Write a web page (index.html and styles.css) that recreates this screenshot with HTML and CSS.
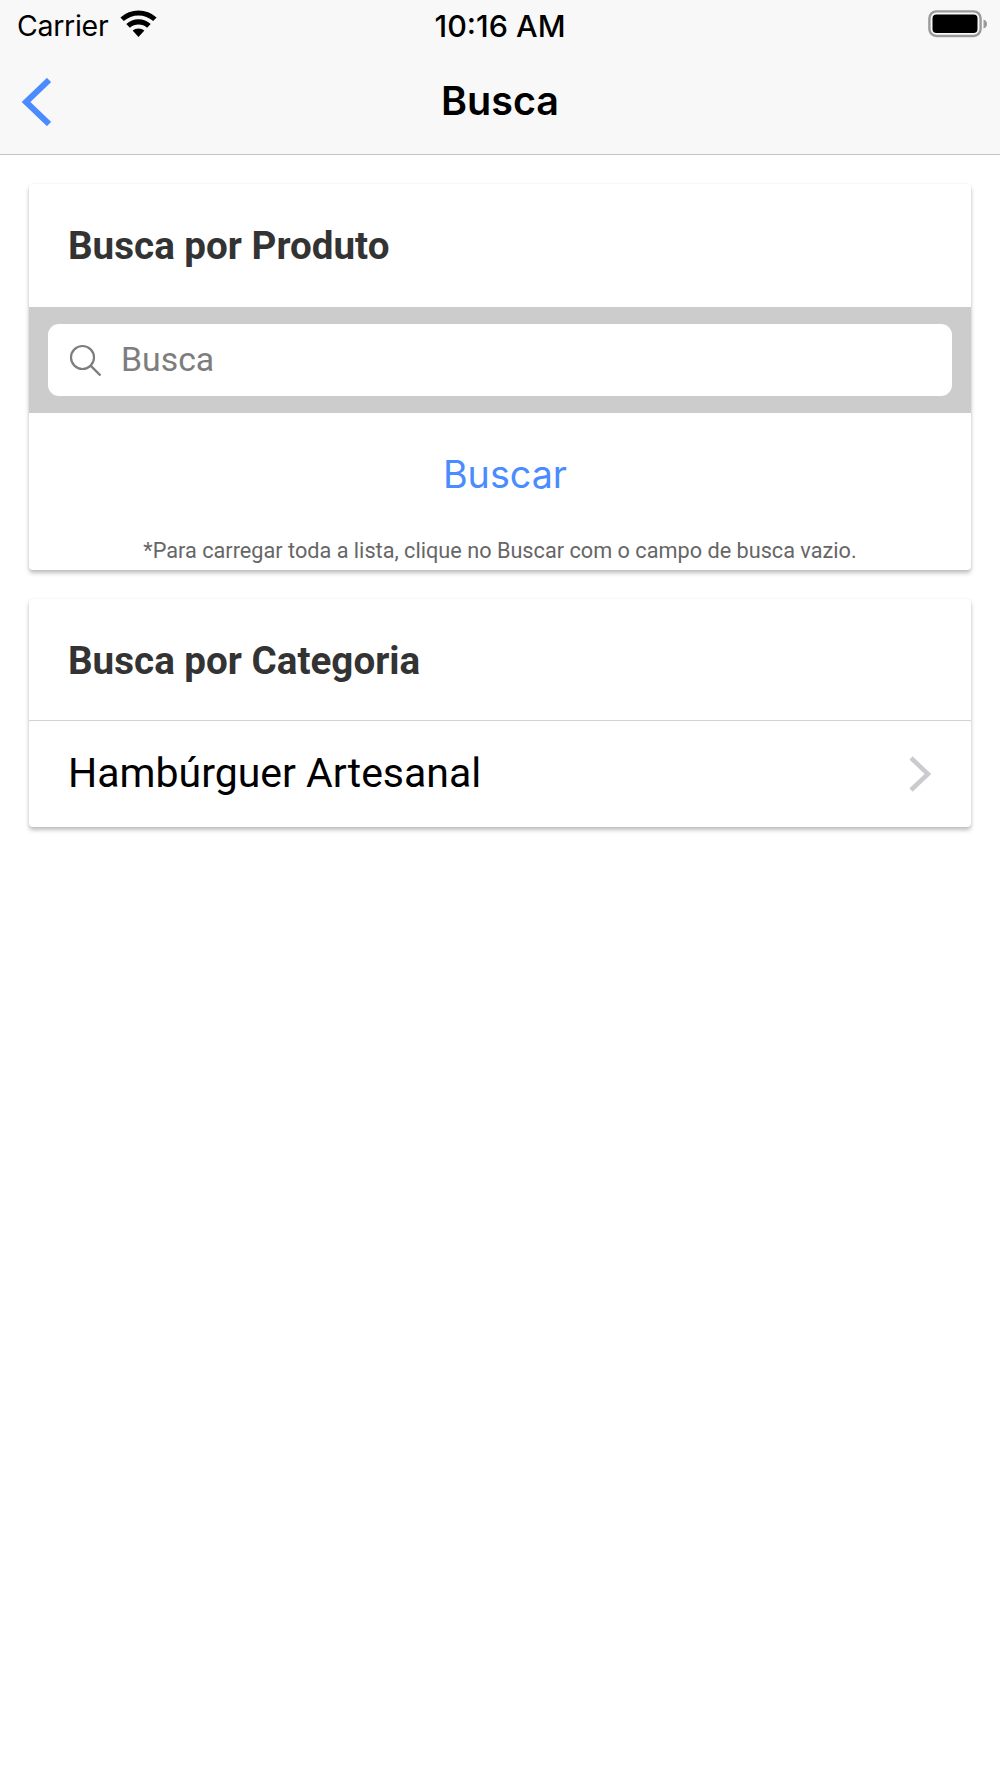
FILE: index.html
```html
<!DOCTYPE html>
<html lang="pt">
<head>
<meta charset="utf-8">
<title>Busca</title>
<link rel="stylesheet" href="styles.css">
</head>
<body>
<header class="top">
  <div class="status">
    <div class="status-left">
      <span class="carrier">Carrier</span>
      <svg class="wifi" width="37" height="27" viewBox="0 0 37 27"><path d="M18.5 27 L12.6 20.6 A9 9 0 0 1 24.4 20.6 Z M9.9 17.8 L6.3 13.9 A18 18 0 0 1 30.7 13.9 L27.1 17.8 A13 13 0 0 0 9.9 17.8 Z M3.8 11.1 L0.4 7.4 A27 27 0 0 1 36.6 7.4 L33.2 11.1 A22 22 0 0 0 3.8 11.1 Z" fill="#000"/></svg>
    </div>
    <span class="time">10:16 AM</span>
    <svg class="battery" width="60" height="28" viewBox="0 0 60 28"><rect x="1.4" y="1.4" width="51.2" height="24.6" rx="7" fill="none" stroke="#9a9a9a" stroke-width="2.4"/><rect x="4.5" y="4.5" width="45" height="18.5" rx="4" fill="#000"/><path d="M55.5 9.5 C58 10.5 59 12 59 14 C59 16 58 17.5 55.5 18.5 Z" fill="#9a9a9a"/></svg>
  </div>
  <div class="nav">
    <svg class="back" width="30" height="48" viewBox="0 0 30 48"><path d="M28 2 L5 24 L28 46" fill="none" stroke="#4a8cff" stroke-width="6"/></svg>
    <h1 class="nav-title">Busca</h1>
  </div>
</header>
<main class="content">
  <section class="card">
    <h2 class="card-title title-product">Busca por Produto</h2>
    <div class="search-bar">
      <div class="search-field">
        <svg class="search-icon" width="33" height="33" viewBox="0 0 33 33"><circle cx="13.5" cy="13.5" r="11.5" fill="none" stroke="#7d7d7d" stroke-width="2.2"/><path d="M21.8 21.8 L31.5 31.5" stroke="#7d7d7d" stroke-width="2.4"/></svg>
        <span class="placeholder">Busca</span>
      </div>
    </div>
    <div class="action"><span class="action-label">Buscar</span></div>
    <p class="note">*Para carregar toda a lista, clique no Buscar com o campo de busca vazio.</p>
  </section>
  <section class="card">
    <h2 class="card-title title-category">Busca por Categoria</h2>
    <div class="row">
      <span class="row-label">Hambúrguer Artesanal</span>
      <svg class="chevron" width="22" height="36" viewBox="0 0 22 36"><path d="M2 2 L19 18 L2 34" fill="none" stroke="#cbcbcf" stroke-width="4.5"/></svg>
    </div>
  </section>
</main>
</body>
</html>
```
FILE: styles.css
```css
* { box-sizing: border-box; }
html, body { margin: 0; padding: 0; }
body { width: 1000px; height: 1778px; background: #fff; font-family: Roboto, sans-serif; overflow: hidden; }

.top { height: 155px; background: #f8f8f8; border-bottom: 1px solid #c4c4c4; }
.status { height: 55px; display: flex; align-items: center; justify-content: space-between; position: relative; padding: 0 27px 4px 17px; }
.status-left { display: flex; align-items: center; gap: 12px; }
.carrier { font-family: Inter, sans-serif; font-size: 28.5px; color: #000; letter-spacing: -0.3px; }
.wifi { display: block; margin-top: -4px; }
.time { position: absolute; left: 0; right: 0; text-align: center; font-family: Inter, sans-serif; font-size: 30.5px; font-weight: 500; color: #000; pointer-events: none; }
.battery { display: block; margin-top: -4px; margin-right: -15px; }

.nav { height: 99px; position: relative; display: flex; align-items: center; justify-content: center; padding-bottom: 32px; }
.back { position: absolute; left: 21px; top: 23px; display: block; }
.nav-title { margin: 0; font-family: Inter, sans-serif; font-size: 39.5px; font-weight: 600; color: #000; line-height: 48px; position: relative; top: 12px; }

.content { padding: 29px 29px 0; display: flex; flex-direction: column; gap: 29px; }
.card { background: #fff; border-radius: 4px; box-shadow: 0 3px 4px rgba(0,0,0,.26), 0 0 2px rgba(0,0,0,.07); overflow: hidden; }
.card-title { margin: 0; padding-left: 39px; font-size: 38.6px; font-weight: 700; color: #333; display: flex; align-items: center; }
.title-product { height: 123px; }
.title-category { height: 122px; border-bottom: 1px solid #d2d2d2; padding-top: 1px; }

.search-bar { height: 106px; background: #ccc; padding: 17px 19px; }
.search-field { height: 72px; background: #fff; border-radius: 11px; display: flex; align-items: center; padding-left: 21px; gap: 19px; }
.search-icon { display: block; margin-top: 1px; }
.placeholder { font-family: Roboto, sans-serif; font-size: 33.8px; color: #7d7d7d; position: relative; top: -1px; }

.action { height: 122px; display: flex; align-items: center; justify-content: center; padding-left: 10px; }
.action-label { font-family: Inter, sans-serif; font-size: 37.7px; color: #4a8cff; }
.note { margin: 0; height: 35px; line-height: 32px; text-align: center; font-size: 21.7px; color: #666; }

.row { height: 106px; display: flex; align-items: center; justify-content: space-between; padding: 0 40px 2px 39px; }
.row-label { font-size: 41px; color: #000; }
.chevron { display: block; margin-top: 2px; }
```
